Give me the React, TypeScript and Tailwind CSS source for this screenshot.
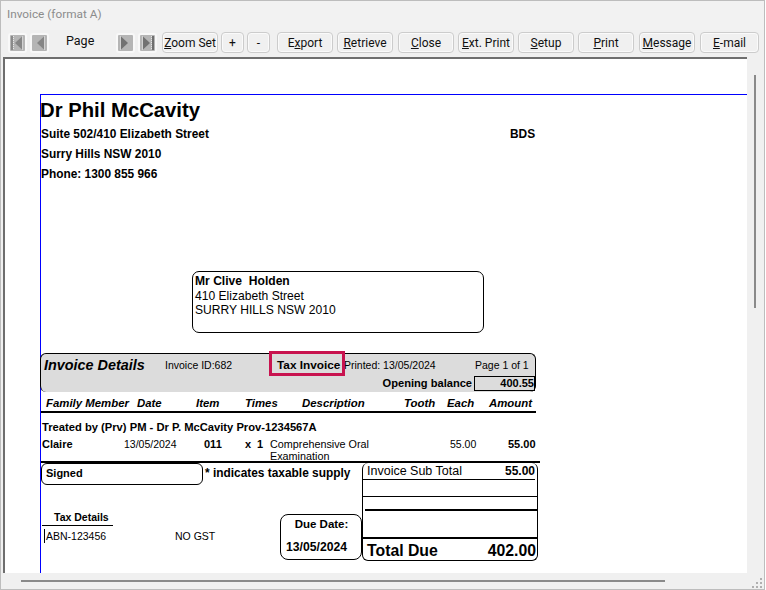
const sans = "font-['Liberation_Sans',Arial,sans-serif]";

function Nav({ flip, bar, dark, className = "" }: { flip?: boolean; bar?: boolean; dark?: boolean; className?: string }) {
  return (
    <div className={"w-[19px] h-[20px] rounded-[3px] border-2 border-[#f8f8f8] bg-[#b5b5b5] flex items-center justify-center shrink-0 " + className}>
      <svg width="15" height="16" viewBox="0 0 15 16" className={flip ? "-scale-x-100" : ""}>
        {bar && <rect x="1" y="1" width="2" height="14" fill={dark ? "#6f6f6f" : "#8a8a8a"} />}
        {bar && <path d="M3.5 1v14" stroke="#e8e8e8" strokeDasharray="1 1" />}
        <path d="M12 1.5 L12 14.5 L5 8 Z" fill={dark ? "#727272" : "#868686"} />
        <path d="M12.5 1.5 V14.5" stroke="#efefef" strokeDasharray="1 1" />
      </svg>
    </div>
  );
}

function Btn({ pre = "", u = "", post = "", w, className = "" }: { pre?: string; u?: string; post?: string; w: string; className?: string }) {
  return (
    <button className={"h-[21px] rounded-[4px] border border-[#cccccc] shadow-[inset_0_0_0_1px_#fafafa] bg-[#f0f0f0] text-[12px] text-[#111] font-['Roboto','Open_Sans',sans-serif] leading-none flex items-center justify-center shrink-0 " + w + " " + className}>
      <span>{pre}<span className="underline">{u}</span>{post}</span>
    </button>
  );
}

export default function App() {
  return (
    <div className={"w-[765px] h-[590px] bg-[#f0f0f0] border border-[#bdbdbd] flex flex-col overflow-hidden " + sans}>
      <div className="h-[29px] shrink-0 pl-[6px] pt-[4px] bg-[#f2f2f2] text-[11.8px] leading-[18px] text-[#8c8c8c] font-['Roboto','Open_Sans',sans-serif]">
        Invoice (format A)
      </div>
      <div className="h-[27px] shrink-0 pl-[7px] pt-[2px] flex items-start">
        <Nav bar className="mt-[1px]" />
        <Nav className="ml-[3px] mt-[1px]" />
        <span className="ml-[17px] text-[12.5px] leading-[18px] text-[#111] font-['Roboto','Open_Sans',sans-serif] w-[50px] shrink-0">Page</span>
        <Nav flip dark className="mt-[1px]" />
        <Nav flip bar dark className="ml-[3px] mt-[1px]" />
        <Btn u="Z" post="oom Set" w="w-[56px]" className="ml-[5px]" />
        <Btn pre="+" w="w-[23px]" className="ml-[3px]" />
        <Btn pre="-" w="w-[23px]" className="ml-[3px]" />
        <Btn pre="E" u="x" post="port" w="w-[56px]" className="ml-[7px]" />
        <Btn u="R" post="etrieve" w="w-[56px]" className="ml-[4px]" />
        <Btn u="C" post="lose" w="w-[56px]" className="ml-[5px]" />
        <Btn u="E" post="xt. Print" w="w-[56px]" className="ml-[4px]" />
        <Btn u="S" post="etup" w="w-[56px]" className="ml-[4px]" />
        <Btn u="P" post="rint" w="w-[56px]" className="ml-[4px]" />
        <Btn u="M" post="essage" w="w-[56px]" className="ml-[5px]" />
        <Btn u="E" post="-mail" w="w-[59px]" className="ml-[5px]" />
      </div>
      <div className="flex-1 flex min-h-0">
        <div className="flex-1 flex flex-col min-w-0">
          <div className="flex-1 min-h-0 ml-[2px] border-t-2 border-t-[#6e6e6e] border-l-2 border-l-[#6e6e6e] bg-white pl-[35px] pt-[35px] overflow-hidden">
            <div className="h-[600px] border-t border-l border-[#0000ff] text-black">
              <div className="w-[495px]">
                <Header />
                <Address />
                <Band />
                <Columns />
                <Treatment />
                <Lower />
              </div>
            </div>
          </div>
          <div className="h-[16px] shrink-0 pl-[20px] pt-[7px]">
            <div className="w-[644px] h-[2px] bg-[#8a8a8a]" />
          </div>
        </div>
        <div className="w-[17px] shrink-0 flex flex-col">
          <div className="flex-1 pl-[7px] pt-[18px]">
            <div className="w-[2px] h-[233px] bg-[#8a8a8a]" />
          </div>
          <div className="h-[16px] shrink-0 flex items-end justify-end pr-[1px] pb-[1px]">
            <svg width="11" height="11" viewBox="0 0 11 11" fill="#b0b0b0">
              <rect x="8" y="1" width="2" height="2" /><rect x="4" y="5" width="2" height="2" /><rect x="8" y="5" width="2" height="2" />
              <rect x="0" y="9" width="2" height="2" /><rect x="4" y="9" width="2" height="2" /><rect x="8" y="9" width="2" height="2" />
            </svg>
          </div>
        </div>
      </div>
    </div>
  );
}

function Header() {
  return (
    <div className="relative h-[89px] pt-[4px]">
      <div className="text-[20.3px] leading-[23px] font-bold -ml-[1px]">Dr Phil McCavity</div>
      <div className="text-[11.9px] leading-[20px] font-bold mt-[2px]">Suite 502/410 Elizabeth Street</div>
      <div className="text-[11.9px] leading-[20px] font-bold">Surry Hills NSW 2010</div>
      <div className="text-[11.9px] leading-[20px] font-bold">Phone: 1300 855 966</div>
      <div className="absolute left-[469px] top-[29px] text-[11.9px] leading-[20px] font-bold">BDS</div>
    </div>
  );
}

function Address() {
  return (
    <div className="ml-[151px] mt-[87px] w-[292px] h-[62px] border border-black rounded-[7px] pl-[2px] pt-[2px] text-[12.1px] leading-[14.5px]">
      <div className="font-bold">Mr Clive&nbsp; Holden</div>
      <div>410 Elizabeth Street</div>
      <div>SURRY HILLS NSW 2010</div>
    </div>
  );
}

function Band() {
  return (
    <div className="relative mt-[20px] h-[39px] -ml-[1px] w-[496px] bg-[#dcdcdc] border-t border-l border-r border-black rounded-[6px] text-[10.5px]">
      <div className="flex items-center h-[23px] -mb-[1px] pl-[3px]">
        <span className="text-[14.4px] font-bold italic w-[121px]">Invoice Details</span>
        <span className="w-[112px]">Invoice ID:682</span>
        <span className="text-[11.8px] font-bold w-[67px]">Tax Invoice</span>
        <span className="w-[131px]">Printed: 13/05/2024</span>
        <span>Page 1 of 1</span>
      </div>
      <div className="flex justify-end h-[15px]">
        <span className="text-[11.1px] font-bold leading-[15px] mr-[2px]">Opening balance</span>
        <span className="w-[61px] h-[15px] border border-black text-[11px] font-bold leading-[13px] text-right">400.55</span>
      </div>
      <div className="absolute left-[228px] -top-[3px] w-[76px] h-[25px] border-[3px] border-[#c8134f]" />
    </div>
  );
}

function Columns() {
  return (
    <div className="h-[21px] border-b-2 border-black flex items-center pl-[5px] text-[11.4px] font-bold italic leading-[13px] pt-[3px]">
      <span className="w-[91px]">Family Member</span>
      <span className="w-[59px]">Date</span>
      <span className="w-[49px]">Item</span>
      <span className="w-[57px]">Times</span>
      <span className="w-[102px]">Description</span>
      <span className="w-[43px]">Tooth</span>
      <span className="w-[42px]">Each</span>
      <span>Amount</span>
    </div>
  );
}

function Treatment() {
  return (
    <div className="pl-[1px] pt-[8px] h-[48px]">
      <div className="text-[11.2px] font-bold leading-[13px]">Treated by (Prv) PM - Dr P. McCavity Prov-1234567A</div>
      <div className="flex mt-[4px] items-start text-[10.5px] leading-[12px]">
        <span className="w-[82px] text-[11px] font-bold">Claire</span>
        <span className="w-[80px]">13/05/2024</span>
        <span className="w-[41px] text-[11px] font-bold">011</span>
        <span className="w-[12px] text-[11px] font-bold">x</span>
        <span className="w-[13px] text-[11px] font-bold">1</span>
        <span className="w-[180px] text-[10.8px]">Comprehensive Oral<br />Examination</span>
        <span className="w-[58px]">55.00</span>
        <span className="text-[11px] font-bold">55.00</span>
      </div>
    </div>
  );
}

function Lower() {
  return (
    <div className="w-[499px] border-t-2 border-black flex">
      <div className="w-[321px] shrink-0">
        <div className="flex items-start">
          <div className="w-[162px] h-[22px] border border-black rounded-[6px] pl-[4px] text-[11px] font-bold leading-[19px]">Signed</div>
          <div className="pl-[2px] text-[11.9px] font-bold leading-[20px]">* indicates taxable supply</div>
        </div>
        <div className="flex mt-[26px]">
          <div className="w-[239px] shrink-0">
            <div className="w-[71px] ml-[1px] border-b border-black pl-[12px] text-[10.5px] font-bold leading-[13px] h-[15px]">Tax Details</div>
            <div className="flex text-[10.5px] leading-[14px] mt-[3px] border-l border-black ml-[3px] pl-[1px] w-[176px]">
              <span className="w-[129px]">ABN-123456</span>
              <span>NO GST</span>
            </div>
          </div>
          <div className="w-[82px] h-[46px] mt-[3px] border border-black rounded-[8px] font-bold">
            <div className="leading-[13px] mt-[3px] text-[11.5px] text-center pl-[1px]">Due Date:</div>
            <div className="leading-[14px] mt-[9px] text-[12.2px] pl-[5px]">13/05/2024</div>
          </div>
        </div>
      </div>
      <div className="w-[176px] h-[98px] border-r border-b border-l border-black rounded-[6px] flex flex-col">
        <div className="h-[17px] shrink-0 border-b border-black mr-[2px] flex justify-between pl-[4px] text-[12.5px] leading-[15px] pt-[1px]">
          <span>Invoice Sub Total</span>
          <span className="font-bold text-[12px]">55.00</span>
        </div>
        <div className="h-[17px] shrink-0 border-b border-black" />
        <div className="h-[14px] shrink-0 border-b-2 border-black ml-[2px]" />
        <div className="h-[28px] shrink-0 border-b-2 border-black" />
        <div className="flex-1 flex justify-between items-center pl-[4px] pr-[1px] text-[15.8px] font-bold">
          <span>Total Due</span>
          <span>402.00</span>
        </div>
      </div>
    </div>
  );
}
